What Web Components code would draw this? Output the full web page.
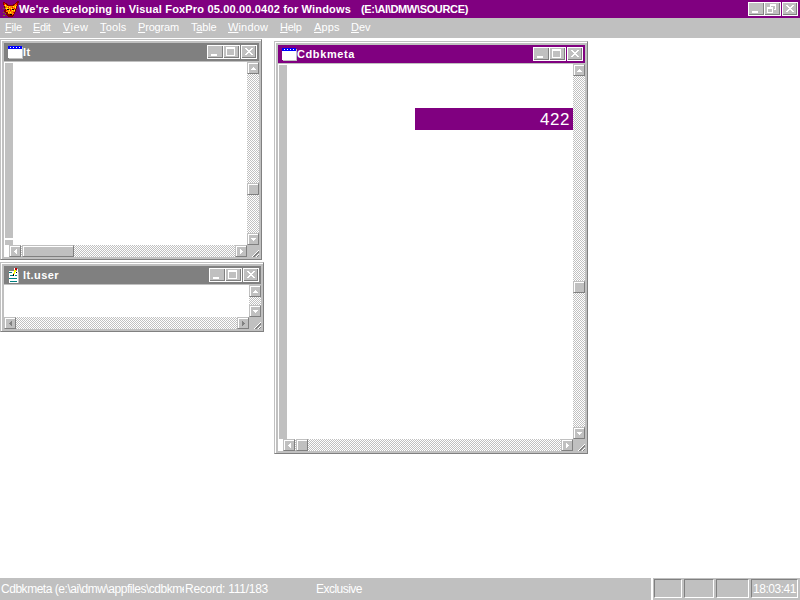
<!DOCTYPE html>
<html lang="en"><head><meta charset="utf-8"><title>Visual FoxPro</title>
<style>
html,body{margin:0;width:800px;height:600px;overflow:hidden;background:#fff}
body{font:11px/13px "Liberation Sans",Arial,sans-serif;color:#fff}
</style></head><body><fox-desktop></fox-desktop>
<script>
const define=(name,html,setup)=>customElements.define(name,class extends HTMLElement{
  static get observedAttributes(){return ['dir','dim','kind'];}
  connectedCallback(){
    if(!this.shadowRoot){this.attachShadow({mode:'open'}).innerHTML=html;}
    if(setup)setup(this,this.shadowRoot);
  }
  attributeChangedCallback(){
    if(this.shadowRoot&&setup)setup(this,this.shadowRoot);
  }
});

define('caption-button',`<style>
:host{display:block;width:16px;height:14px;box-sizing:border-box;border:1px solid #fff;background:#c0c0c0}
:host([joined]){margin-right:-1px;width:17px}
div{box-sizing:border-box;height:100%;border-right:1px solid #808080;border-bottom:1px solid #808080}
svg{display:block;width:13px;height:11px;shape-rendering:crispEdges}
</style><div><svg viewBox="0 0 13 11"><path fill="#fff" fill-rule="evenodd"/></svg></div>`,(el,root)=>{
  const icons={
    min:'M3 8h6v2H3z',
    max:'M2 1h9v9H2zM3 3v6h7V3z',
    restore:'M5 1h6v6H9V6h1V3H6v1H5zM2 4h6v6H2zM3 6v3h4V6z',
    close:'M3 2h2v1H3zM9 2h2v1H9zM4 3h2v1H4zM8 3h2v1H8zM5 4h4v1H5zM6 5h2v1H6zM5 6h4v1H5zM4 7h2v1H4zM8 7h2v1H8zM3 8h2v1H3zM9 8h2v1H9z'
  };
  root.querySelector('path').setAttribute('d',icons[el.getAttribute('kind')]||'');
});

define('caption-controls',`<style>
:host{display:flex;gap:0;flex:none}
caption-button[kind=close]{margin-left:2px}
</style><caption-button kind="min" joined></caption-button><caption-button id="max" kind="max" joined></caption-button><caption-button kind="close"></caption-button>`,(el,root)=>{
  if(el.hasAttribute('restore'))root.getElementById('max').setAttribute('kind','restore');
});

define('scroll-button',`<style>
:host{display:block;flex:none;box-sizing:border-box;width:var(--w,12px);height:var(--h,12px);border:1px solid;border-color:#c0c0c0 #808080 #808080 #c0c0c0;background:#c0c0c0}
div{height:100%;box-sizing:border-box;border-left:1px solid #fff;border-top:1px solid #fff}
svg{display:block;width:9px;height:9px;shape-rendering:crispEdges}
</style><div><svg viewBox="0 0 9 9"><path/></svg></div>`,(el,root)=>{
  const icons={
    up:'M4 3h1v1h1v1h1v1H2V5h1V4h1z',down:'M2 3h5v1H6v1H5v1H4V5H3V4H2z',
    left:'M5 2h1v5H5V6H4V5H3V4h1V3h1z',right:'M3 2h1v1h1v1h1v1H5v1H4v1H3z'
  };
  const p=root.querySelector('path');p.setAttribute('d',icons[el.getAttribute('dir')]||'');
  p.setAttribute('fill',el.hasAttribute('dim')?'#808080':'#fff');
});

define('scroll-bar',`<style>
:host{display:flex;background:repeating-conic-gradient(#c0c0c0 0 25%,#fff 0 50%) 0 0/2px 2px;justify-content:space-between;overflow:hidden}
:host([vertical]){flex-direction:column}
.gap{flex:none}.rest{flex:1}
</style><scroll-button id="a"></scroll-button><span class="gap"></span><scroll-button id="t"></scroll-button><span class="rest"></span><scroll-button id="b"></scroll-button>`,(el,root)=>{
  const v=el.hasAttribute('vertical'),a=root.getElementById('a'),b=root.getElementById('b'),t=root.getElementById('t');
  a.setAttribute('dir',v?'up':'left');b.setAttribute('dir',v?'down':'right');
  if(el.hasAttribute('dim')){a.setAttribute('dim','');b.setAttribute('dim','');}
  if(!el.hasAttribute('thumb')){if(t)t.remove();}
  else{
    root.querySelector('.gap').style[v?'height':'width']=el.getAttribute('thumb')+'px';
    t.style.setProperty(v?'--h':'--w',(el.getAttribute('size')||12)+'px');
  }
});

define('table-icon',`<style>:host{display:block;width:15px;height:13px}svg{display:block;shape-rendering:crispEdges}</style>
<svg width="15" height="13"><path fill="#c0c0c0" d="M1 1h14v12H1z"/><path fill="#fff" d="M0 0h14v12H0z"/><path fill="#00f" d="M0 0h14v3H0z"/><path fill="#fff" d="M2 1h1v1H2zM5 1h1v1H5zM8 1h1v1H8zM11 1h1v1h-1z"/></svg>`);

define('memo-icon',`<style>:host{display:block;width:15px;height:16px}svg{display:block;shape-rendering:crispEdges}</style>
<svg width="15" height="16"><path fill="#fff" d="M1 4h9v12H1z"/><path fill="#c0c0c0" d="M10 5h1v11h-1z"/><path fill="#008080" d="M1 5h3v1H1zM2 8h3v1H2zM7 8h2v1H7zM1 11h8v1H1zM2 14h7v1H2z"/><path fill="#ff0" d="M6 3h2v2H7v2H6v2H5V6h1z"/><path fill="#000" d="M5 7h1v2H5zM8 5h1v1H8z"/><path fill="#fff" d="M6 1h1v2H6zM9 2h1v2H9z"/><path fill="#c00000" d="M7 1h2v2H7z"/></svg>`);

define('fox-icon',`<style>:host{display:block;width:16px;height:16px}svg{display:block;shape-rendering:crispEdges}</style>
<svg width="16" height="16">
<path fill="#800000" d="M0 1h2v1h2v1h1v1h5V3h2V2h1V1h1V0h2v2h-1v3h-1v3h-1v3h-1v2h-1v2h-1v1H5v-1H4v-1H3v-1H2v-2H1V9h1V7H1V4H0z"/>
<path fill="#ff8000" d="M1 2h1v1h1v1h1v1h7V4h1V3h1V2h1v3h-1v3h-1v3h-1v2h-1v1H7v-1H5v-2H3V8H2V5H1z"/>
<path fill="#ff0" d="M2 4h1v1H2zM4 5h1v1H4zM3 7h2v1H3zM6 6h1v1H6zM8 7h1v1H8zM10 5h1v1h-1zM12 5h1v2h-1zM6 9h1v1H6zM9 9h1v1H9zM7 11h1v1H7zM11 9h1v1h-1zM5 11h1v1H5z"/>
<path fill="#f00" d="M1 2h1v2H1zM13 2h1v2h-1zM5 6h1v1H5zM7 8h1v2H7zM11 7h1v1h-1zM3 9h1v1H3zM10 11h1v1h-1zM9 6h1v1H9z"/>
<path fill="#000" d="M4 8h2v1H4zM9 8h2v1H9zM7 13h2v1H7z"/>
<path fill="#808000" d="M0 7h1v1H0zM0 11h1v1H0zM0 14h2v1H0zM2 12h1v1H2zM2 6h1v1H2z"/></svg>`);

define('mdi-window',`<style>
:host{display:grid;grid-template-rows:18px 1px minmax(0,1fr);box-sizing:border-box;background:#c0c0c0;border:1px solid;border-color:#c0c0c0 #808080 #808080 #c0c0c0;padding:3px 2px 2px 3px;box-shadow:inset 1px 1px #fff}
header{display:flex;align-items:center;background:var(--caption,#808080);font-weight:bold;padding:0 2px 0 4px}
.name{flex:1;display:flex}
.body{grid-row:3;display:grid;grid-template:minmax(0,1fr) 12px/minmax(0,1fr) 12px;background:#fff}
.h{display:flex}.h ::slotted(scroll-bar){flex:1}
.client{min-width:0}
.grip{background:#c0c0c0}.grip svg{display:block;shape-rendering:crispEdges}
::slotted(scroll-bar[vertical]){height:100%}
</style><header><slot name="icon"></slot><div class="name"><slot name="title"></slot></div><caption-controls></caption-controls></header>
<div class="body"><div class="client"><slot></slot></div><slot name="v"></slot><div class="h"><slot name="h"></slot></div><div class="grip"><svg width="12" height="12"><path stroke="#808080" d="M6 12l6-6M7 12l5-5M10 12l2-2"/><path stroke="#fff" d="M5 12l7-7M9 12l3-3"/></svg></div></div>`);

define('browse-grid',`<style>
:host{display:flex;height:100%;box-sizing:border-box;padding:1px 0 0 1px}
.strip{width:8px;flex:none;background:#c0c0c0;display:flex;flex-direction:column;justify-content:flex-end}
.split{height:2px;margin-bottom:5px;background:#fff;display:none}
:host([split]) .split{display:block}
.cells{flex:1;min-width:0}
</style><div class="strip"><div class="split"></div></div><div class="cells"><slot></slot></div>`);

define('menu-bar',`<style>
:host{display:grid;grid-template-columns:28px 30px 37px 38px 53px 37px 52px 34px 37px auto;justify-content:start;align-items:center;background:#c0c0c0;padding:0 0 2px 5px;line-height:14px}
u{text-underline-offset:1px;text-decoration-thickness:1px;text-decoration-skip-ink:none}
</style>
<fit-text w="17"><u>F</u>ile</fit-text><fit-text w="17.5"><u>E</u>dit</fit-text><fit-text w="25.5"><u>V</u>iew</fit-text><fit-text w="26.5"><u>T</u>ools</fit-text><fit-text w="41"><u>P</u>rogram</fit-text><fit-text w="25.5">T<u>a</u>ble</fit-text><fit-text w="40"><u>W</u>indow</fit-text><fit-text w="21.5"><u>H</u>elp</fit-text><fit-text w="25.5"><u>A</u>pps</fit-text><fit-text w="19.5"><u>D</u>ev</fit-text>`);

define('status-bar',`<style>
:host{display:flex;background:#c0c0c0;font-size:12px;line-height:22px}
.file{width:184px;overflow:hidden;padding-left:1px;box-sizing:border-box;white-space:nowrap}
.record{width:131px;padding-left:1px}.mode{flex:1}
.panels{display:flex;gap:2px;box-sizing:border-box;padding:1px 2px 2px 1px;border-left:2px solid #fff}
.panels>div{box-sizing:border-box;border:1px solid;border-color:#808080 #fff #fff #808080;line-height:18px;padding-left:1px;white-space:nowrap}
</style><div class="file"><fit-text w="187">Cdbkmeta (e:\\ai\\dmw\\appfiles\\cdbkme</fit-text></div><div class="record"><fit-text w="83">Record: 111/183</fit-text></div><div class="mode"><fit-text w="46">Exclusive</fit-text></div>
<div class="panels"><div style="width:28px"></div><div style="width:30px"></div><div style="width:33px"></div><div style="width:47px"><fit-text w="43">18:03:41</fit-text></div></div>`);

define('fox-desktop',`<style>
:host{display:grid;grid-template-rows:18px 20px 1fr 22px;width:800px;height:600px;background:#fff;overflow:hidden}
.top{display:flex;align-items:center;background:#800080;font-weight:bold;padding:0 2px 0 3px}
.caption{flex:1;display:flex;gap:10px}
.desk{position:relative}
mdi-window{position:absolute}
.cell{margin:43px 0 0 128px;height:22px;background:#800080;font:17px/23px "Liberation Sans",Arial,sans-serif;display:flex;justify-content:flex-end;padding-right:3px}
</style>
<div class="top"><fox-icon></fox-icon><div class="caption"><fit-text w="332">We're developing in Visual FoxPro 05.00.00.0402 for Windows</fit-text><fit-text w="107">(E:\\AI\\DMW\\SOURCE)</fit-text></div><caption-controls restore></caption-controls></div>
<menu-bar></menu-bar>
<div class="desk">
<mdi-window style="left:0;top:1px;width:262px;height:221px"><table-icon slot="icon"></table-icon><fit-text slot="title" w="7.5">lt</fit-text>
<browse-grid split></browse-grid><scroll-bar slot="v" vertical thumb="109"></scroll-bar><scroll-bar slot="h" thumb="1" size="52" style="margin-left:5px"></scroll-bar></mdi-window>
<mdi-window style="left:0;top:224px;width:264px;height:70px"><memo-icon slot="icon"></memo-icon><fit-text slot="title" w="36">lt.user</fit-text>
<scroll-bar slot="v" vertical></scroll-bar><scroll-bar slot="h" dim></scroll-bar></mdi-window>
<mdi-window style="left:274px;top:3px;width:314px;height:413px;--caption:#800080"><table-icon slot="icon"></table-icon><fit-text slot="title" w="58">Cdbkmeta</fit-text>
<browse-grid><div class="cell"><fit-text w="30">422</fit-text></div></browse-grid><scroll-bar slot="v" vertical thumb="205"></scroll-bar><scroll-bar slot="h" thumb="1" style="margin-left:5px"></scroll-bar></mdi-window>
</div><status-bar></status-bar>`);

/* Spreads its text over a given advance width by adjusting the tracking. */
define('fit-text',`<style>:host{display:inline-block;white-space:nowrap;flex:none;justify-self:start}</style><slot></slot>`,el=>{
  const n=el.textContent.length,w=+el.getAttribute('w');
  el.style.letterSpacing=(w-el.getBoundingClientRect().width)/n+'px';
});
</script></body></html>
